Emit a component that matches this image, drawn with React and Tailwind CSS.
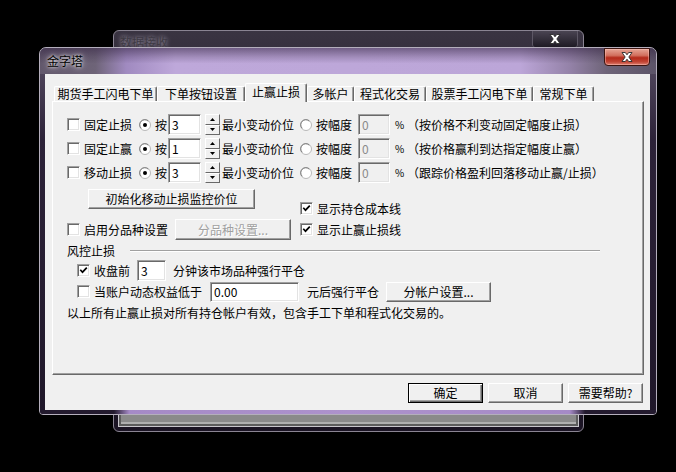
import React from 'react';

const FONT = "font-['Noto_Sans_CJK_SC','Noto_Sans',sans-serif]";

function CloseGlyph() {
    return (
        <svg width="12" height="10" viewBox="0 0 12 10">
            <path d="M1 0.5 H4.3 L6 2.8 L7.7 0.5 H11 L7.8 5 L11 9.5 H7.7 L6 7.2 L4.3 9.5 H1 L4.2 5 Z" fill="#fff" stroke="#2a2a2a" strokeWidth="0.9" />
        </svg>
    );
}

function Check({ checked }) {
    return (
        <span className="flex items-center justify-center w-[13px] h-[13px] shrink-0 bg-white border border-t-[#a0a0a0] border-l-[#a0a0a0] border-r-white border-b-white shadow-[inset_1px_1px_0_#696969,inset_-1px_-1px_0_#e3e3e3]">
            {checked && (
                <svg width="9" height="9" viewBox="0 0 9 9">
                    <path d="M1.3 3.8 L3.5 6.2 L7.8 1.6" stroke="#000" strokeWidth="1.7" fill="none" />
                </svg>
            )}
        </span>
    );
}

function Radio({ on }) {
    return (
        <svg width="12" height="12" viewBox="0 0 12 12" className="shrink-0">
            <circle cx="6" cy="6" r="5.5" fill="#fff" stroke="#b8b8b8" />
            <path d="M2.2 9.3 A4.6 4.6 0 0 1 9.3 2.2" stroke="#7a7a7a" fill="none" />
            {on && <circle cx="6" cy="6" r="2" fill="#000" />}
        </svg>
    );
}

function Field({ className, value, disabled }) {
    return (
        <span className={`flex items-center shrink-0 pl-[3px] border border-t-[#a0a0a0] border-l-[#a0a0a0] border-r-white border-b-white shadow-[inset_1px_1px_0_#696969,inset_-1px_-1px_0_#e3e3e3] ${disabled ? 'bg-[#f0f0f0] text-[#8a8a8a]' : 'bg-white text-black'} ${className}`}>
            {value}
        </span>
    );
}

function Spinner() {
    return (
        <span className="flex flex-col w-[15px] h-[21px] ml-[4px] shrink-0">
            <span className="flex-1 flex items-center justify-center bg-[#f0f0f0] border border-t-white border-l-white border-r-[#696969] border-b-[#696969]">
                <svg width="5" height="3" viewBox="0 0 5 3"><path d="M0 3 L2.5 0 L5 3 Z" fill="#000" /></svg>
            </span>
            <span className="flex-1 flex items-center justify-center bg-[#f0f0f0] border border-t-white border-l-white border-r-[#696969] border-b-[#696969]">
                <svg width="5" height="3" viewBox="0 0 5 3"><path d="M0 0 L2.5 3 L5 0 Z" fill="#000" /></svg>
            </span>
        </span>
    );
}

function Btn({ className, children, def, disabled }) {
    const frame = def
        ? 'border border-black shadow-[inset_1px_1px_0_#fff,inset_-1px_-1px_0_#696969,inset_-2px_-2px_0_#a0a0a0]'
        : 'border border-t-white border-l-white border-r-[#696969] border-b-[#696969] shadow-[inset_-1px_-1px_0_#a0a0a0]';
    return (
        <span className={`flex items-center justify-center shrink-0 bg-[#f0f0f0] ${frame} ${disabled ? 'text-[#a0a0a0] [text-shadow:1px_1px_0_#fff]' : 'text-black'} ${className}`}>
            {children}
        </span>
    );
}

function Tab({ className, children, active }) {
    return (
        <span className={`flex justify-center shrink-0 rounded-t-[2px] border-t border-l border-r border-t-white border-l-white border-r-[#696969] shadow-[inset_-1px_0_0_#a0a0a0] ${active ? 'h-[19px] mb-[-1px] pt-[2px] bg-[#f0f0f0] z-10' : 'h-[15px] pt-[1px]'} ${className}`}>
            {children}
        </span>
    );
}

function StopRow({ label, value, note }) {
    return (
        <div className="flex items-center h-[21px] mb-[3px]">
            <Check />
            <span className="ml-[4px] w-[48px]">{label}</span>
            <span className="ml-[7px]"><Radio on /></span>
            <span className="ml-[4px] w-[12px]">按</span>
            <Field className="ml-[1px] w-[33px] h-[21px]" value={value} />
            <Spinner />
            <span className="ml-[2px] w-[72px]">最小变动价位</span>
            <span className="ml-[6px]"><Radio /></span>
            <span className="ml-[4px] w-[36px]">按幅度</span>
            <Field className="ml-[6px] w-[32px] h-[21px]" value="0" disabled />
            <span className="ml-[5px] w-[6px] text-[10px]">%</span>
            <span className="ml-[6px] whitespace-nowrap">{note}</span>
        </div>
    );
}

export default function App() {
    return (
        <div className={`relative w-[676px] h-[472px] bg-black overflow-hidden text-[12px] leading-[12px] ${FONT}`}>
            {/* back window: 数据接收 */}
            <div className="absolute left-[113px] top-[30px] w-[471px] h-[402px] rounded-[6px] border border-[#8a8492] bg-[linear-gradient(to_bottom,#3a3442,#14101a_45%,#1b1424)] flex flex-col">
                <div className="flex items-start h-[16px]">
                    <span className="mt-[5px] ml-[6px] text-[#3e3a44] [text-shadow:0_0_4px_rgba(210,200,220,0.7)]">数据接收</span>
                    <span className="ml-auto mr-[5px] w-[46px] h-[16px] flex items-center justify-center border-l border-r border-[#5e5866] rounded-b-[3px] bg-[linear-gradient(to_bottom,#4a4452,#1e1a24)]">
                        <CloseGlyph />
                    </span>
                </div>
                <div className="flex-1 mx-[4px] mt-[1px] mb-[4px] border border-[#c8c6cc] bg-[#5c5c5c] p-[2px]">
                    <div className="w-full h-full border-b-[2px] border-[#b0b0b0] bg-[#8a8a8a]" />
                </div>
            </div>

            {/* front window: 金字塔 */}
            <div className="absolute left-[39px] top-[47px] w-[618px] h-[368px] rounded-t-[7px] rounded-b-[4px] border border-[#b4aebc] overflow-hidden flex flex-col bg-[linear-gradient(to_bottom,#5a5066,#2c2238_25%,#1f1729)]">
                <div className="flex items-start h-[26px] shrink-0 bg-[linear-gradient(to_bottom,rgba(50,34,64,0.55)_0%,rgba(50,34,64,0.2)_35%,rgba(50,34,64,0)_60%),linear-gradient(to_right,#62586c_0%,#6e6478_9%,#a08ac0_14%,#bea8da_22%,#bca6d8_78%,#9482a8_86%,#6e6478_92%,#5c5468_100%)]">
                    <span className="mt-[7px] ml-[7px] text-black [text-shadow:0_0_6px_rgba(255,255,255,0.9),0_0_3px_rgba(255,255,255,0.8)]">金字塔</span>
                    <span className="ml-auto mr-[6px] w-[46px] h-[18px] flex items-center justify-center rounded-b-[4px] border border-[#3c1410] bg-[linear-gradient(to_bottom,#e6a494_0%,#d2705e_40%,#b42a1a_55%,#c24434_80%,#de8070_100%)] shadow-[inset_0_0_0_1px_rgba(255,200,190,0.45)]">
                        <CloseGlyph />
                    </span>
                </div>

                <div className="flex flex-1">
                    <div className="w-[5px] shrink-0" />
                    <div className="w-[605px] shrink-0 bg-[#f0f0f0] flex flex-col pl-[7px] pt-[9px]">
                        <div className="flex items-end h-[18px] ml-[2px] relative z-10">
                            <Tab className="w-[103px]">期货手工闪电下单</Tab>
                            <Tab className="w-[88px]">下单按钮设置</Tab>
                            <Tab className="w-[62px]" active>止赢止损</Tab>
                            <Tab className="w-[47px]">多帐户</Tab>
                            <Tab className="w-[72px]">程式化交易</Tab>
                            <Tab className="w-[107px]">股票手工闪电下单</Tab>
                            <Tab className="w-[61px]">常规下单</Tab>
                        </div>

                        <div className="w-[592px] h-[274px] shrink-0 border border-t-white border-l-white border-r-[#696969] border-b-[#696969] shadow-[inset_-1px_-1px_0_#a0a0a0] pl-[14px] pt-[12px] flex flex-col">
                            <StopRow label="固定止损" value="3" note="（按价格不利变动固定幅度止损）" />
                            <StopRow label="固定止赢" value="1" note="（按价格赢利到达指定幅度止赢）" />
                            <StopRow label="移动止损" value="3" note="（跟踪价格盈利回落移动止赢/止损）" />

                            <div className="flex items-start mt-[3px]">
                                <Btn className="ml-[21px] w-[167px] h-[20px]">初始化移动止损监控价位</Btn>
                                <div className="flex items-center h-[13px] mt-[13px] ml-[45px]">
                                    <Check checked />
                                    <span className="ml-[4px]">显示持仓成本线</span>
                                </div>
                            </div>

                            <div className="flex items-center h-[21px] mt-[4px]">
                                <Check />
                                <span className="ml-[4px] w-[84px]">启用分品种设置</span>
                                <Btn className="ml-[7px] w-[116px] h-[21px]" disabled>分品种设置...</Btn>
                                <span className="ml-[9px]"><Check checked /></span>
                                <span className="ml-[4px]">显示止赢止损线</span>
                            </div>

                            <div className="flex items-center h-[12px] mt-[5px]">
                                <span className="w-[48px]">风控止损</span>
                                <span className="ml-[15px] w-[470px] border-t border-t-[#a0a0a0] border-b border-b-white" />
                            </div>

                            <div className="flex items-center h-[21px] mt-[3px] pl-[10px]">
                                <Check checked />
                                <span className="ml-[4px] w-[36px]">收盘前</span>
                                <Field className="ml-[7px] w-[29px] h-[21px]" value="3" />
                                <span className="ml-[7px]">分钟该市场品种强行平仓</span>
                            </div>

                            <div className="flex items-center h-[21px] pl-[10px]">
                                <Check />
                                <span className="ml-[4px] w-[108px]">当账户动态权益低于</span>
                                <Field className="ml-[8px] w-[89px] h-[20px]" value="0.00" />
                                <span className="ml-[8px] w-[72px]">元后强行平仓</span>
                                <Btn className="ml-[7px] w-[105px] h-[20px]">分帐户设置...</Btn>
                            </div>

                            <div className="mt-[5px] whitespace-nowrap">以上所有止赢止损对所有持仓帐户有效，包含手工下单和程式化交易的。</div>
                        </div>

                        <div className="flex justify-end gap-[5px] mt-[8px] mr-[7px]">
                            <Btn className="w-[75px] h-[20px]" def>确定</Btn>
                            <Btn className="w-[75px] h-[20px]">取消</Btn>
                            <Btn className="w-[75px] h-[20px]">需要帮助?</Btn>
                        </div>
                    </div>
                    <div className="flex-1" />
                </div>

                <div className="h-[4px] shrink-0 bg-[linear-gradient(to_right,#231a2e_0%,#231a2e_12%,#a58ac6_14.5%,#ad92cc_50%,#a58ac6_86%,#231a2e_88.5%,#231a2e_100%)]" />
            </div>
        </div>
    );
}
